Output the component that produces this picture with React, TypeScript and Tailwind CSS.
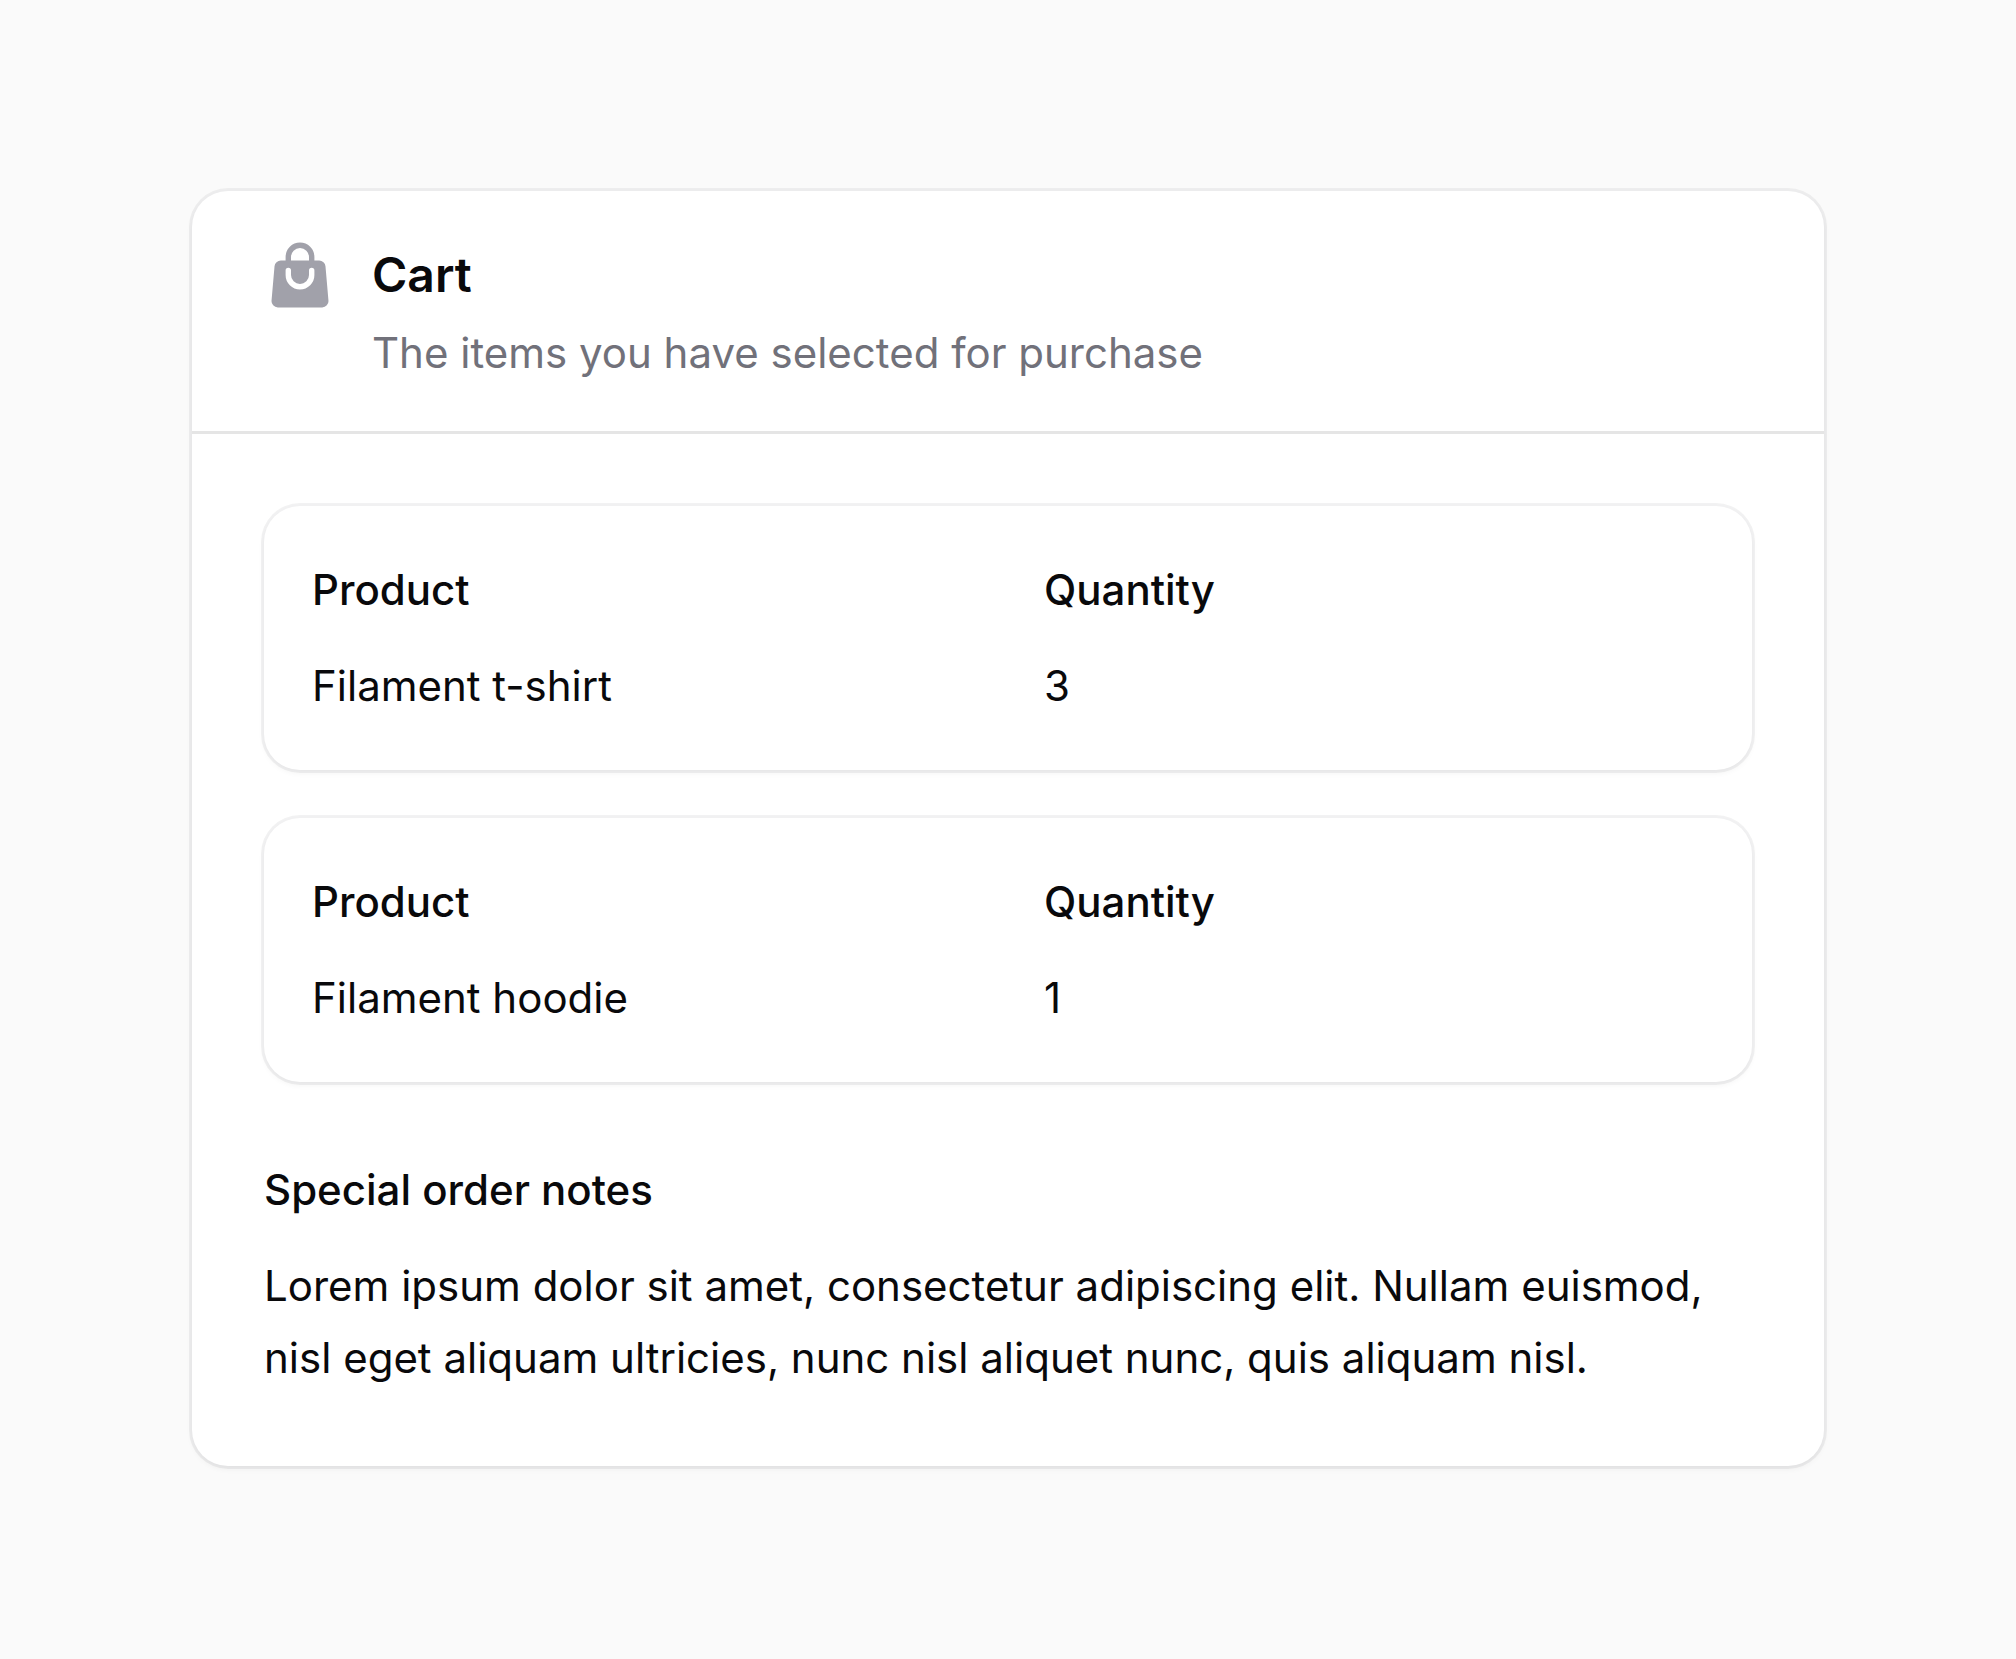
type Item = { product: string; quantity: number };

const items: Item[] = [
  { product: "Filament t-shirt", quantity: 3 },
  { product: "Filament hoodie", quantity: 1 },
];

function ShoppingBag() {
  return (
    <svg
      viewBox="0 0 20 20"
      fill="currentColor"
      aria-hidden="true"
      className="size-18 shrink-0 text-[#a1a1aa]"
    >
      <path
        fillRule="evenodd"
        clipRule="evenodd"
        d="M6 5v1H4.667a1.75 1.75 0 0 0-1.743 1.598l-.826 9.5A1.75 1.75 0 0 0 3.84 19H16.16a1.75 1.75 0 0 0 1.743-1.902l-.826-9.5A1.75 1.75 0 0 0 15.333 6H14V5a4 4 0 0 0-8 0Zm4-2.5A2.5 2.5 0 0 0 7.5 5v1h5V5A2.5 2.5 0 0 0 10 2.5ZM7.5 10a2.5 2.5 0 0 0 5 0V8.75a.75.75 0 0 1 1.5 0V10a4 4 0 0 1-8 0V8.75a.75.75 0 0 1 1.5 0V10Z"
      />
    </svg>
  );
}

function Entry({ label, value }: { label: string; value: string | number }) {
  return (
    <div className="grid gap-6">
      <dt className="font-medium">{label}</dt>
      <dd>{value}</dd>
    </div>
  );
}

export default function App() {
  return (
    <main className="min-h-screen bg-[#fafafa] px-48 py-[191px] font-['Inter',sans-serif] text-[42px] leading-18 text-[#09090b] antialiased [font-optical-sizing:none]">
      <section className="rounded-[36px] bg-white shadow-[0_0_0_3px_rgba(9,9,11,0.05),0_3px_6px_0_rgba(0,0,0,0.05)]">
        <header className="flex gap-9 px-18 py-12">
          <ShoppingBag />
          <div className="grid flex-1 gap-3">
            <h1 className="text-5xl leading-18 font-semibold">Cart</h1>
            <p className="leading-15 text-[#71717a]">
              The items you have selected for purchase
            </p>
          </div>
        </header>

        <div className="grid gap-18 border-t-3 border-[#e5e5e5] p-18">
          <ul className="grid gap-12">
            {items.map((item) => (
              <li
                key={item.product}
                className="rounded-[36px] bg-white p-12 shadow-[0_0_0_3px_rgba(9,9,11,0.05),0_3px_6px_0_rgba(0,0,0,0.05)]"
              >
                <dl className="grid grid-cols-2 gap-18">
                  <Entry label="Product" value={item.product} />
                  <Entry label="Quantity" value={item.quantity} />
                </dl>
              </li>
            ))}
          </ul>

          <dl>
            <Entry
              label="Special order notes"
              value="Lorem ipsum dolor sit amet, consectetur adipiscing elit. Nullam euismod, nisl eget aliquam ultricies, nunc nisl aliquet nunc, quis aliquam nisl."
            />
          </dl>
        </div>
      </section>
    </main>
  );
}
